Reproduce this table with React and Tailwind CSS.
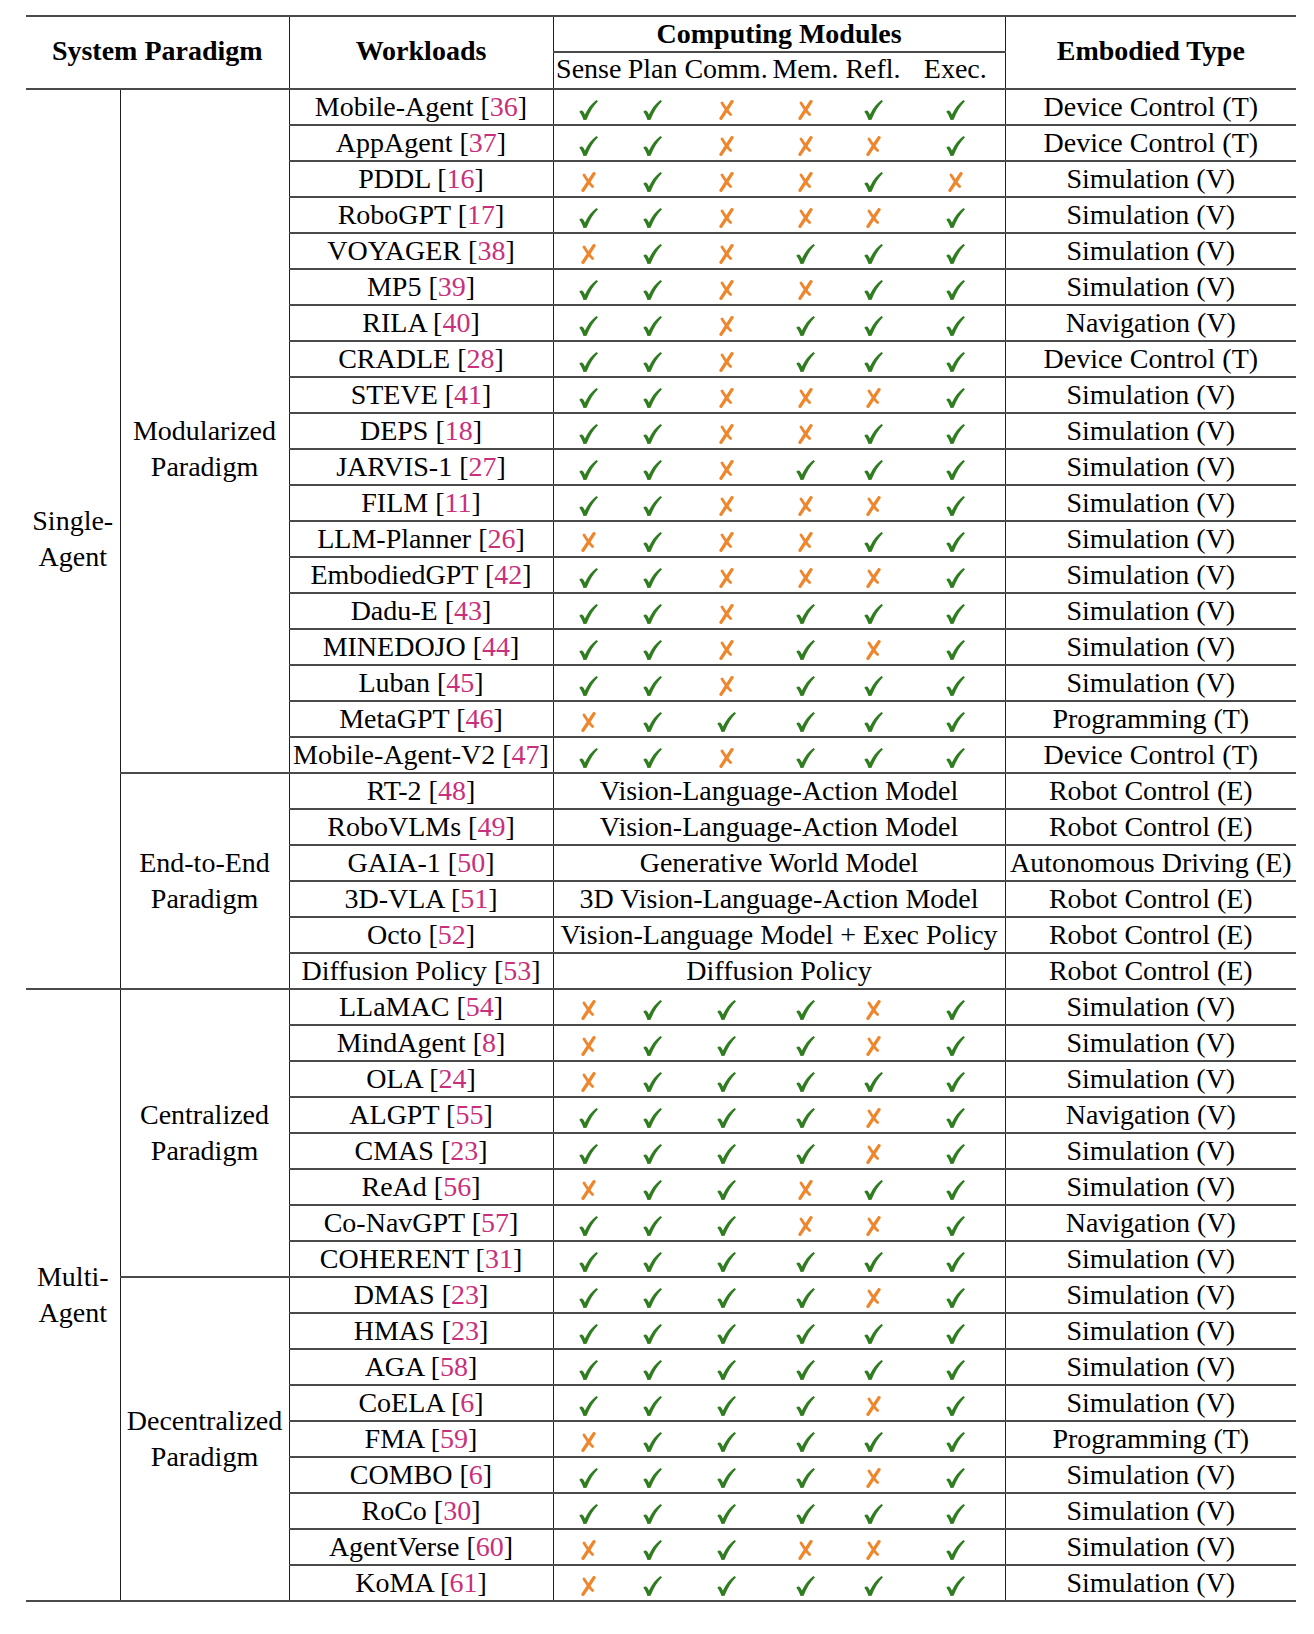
import React from 'react';

const GREEN = '#2f7d20';
const ORANGE = '#f0862c';

const Check = () => (
  <svg width="19" height="20" viewBox="0 0 19 20" className="inline-block align-middle">
    <path
      d="M0.3,11.8 C1.6,10.2 3.4,10.2 4.4,11.8 L5.9,14.4 C8.8,8.6 12.6,3.6 17.4,0 L19,1.3 C14.4,5.8 10.6,12 7.6,19.8 L4.5,20 C3.5,16.8 2,14 0.3,11.8 Z"
      fill={GREEN}
    />
  </svg>
);

const Cross = () => (
  <svg width="15" height="20" viewBox="0 0 15 20" className="inline-block align-middle">
    <path d="M13,1.7 C9.5,7 5.5,13 2,18.3" stroke={ORANGE} strokeWidth="3.3" strokeLinecap="round" fill="none" />
    <path d="M3,3 C5.5,7 8,11 11.6,14.6" stroke={ORANGE} strokeWidth="2.8" strokeLinecap="round" fill="none" />
  </svg>
);

const modular = [
  ['Mobile-Agent', '36', '110011', 'Device Control (T)'],
  ['AppAgent', '37', '110001', 'Device Control (T)'],
  ['PDDL', '16', '010010', 'Simulation (V)'],
  ['RoboGPT', '17', '110001', 'Simulation (V)'],
  ['VOYAGER', '38', '010111', 'Simulation (V)'],
  ['MP5', '39', '110011', 'Simulation (V)'],
  ['RILA', '40', '110111', 'Navigation (V)'],
  ['CRADLE', '28', '110111', 'Device Control (T)'],
  ['STEVE', '41', '110001', 'Simulation (V)'],
  ['DEPS', '18', '110011', 'Simulation (V)'],
  ['JARVIS-1', '27', '110111', 'Simulation (V)'],
  ['FILM', '11', '110001', 'Simulation (V)'],
  ['LLM-Planner', '26', '010011', 'Simulation (V)'],
  ['EmbodiedGPT', '42', '110001', 'Simulation (V)'],
  ['Dadu-E', '43', '110111', 'Simulation (V)'],
  ['MINEDOJO', '44', '110101', 'Simulation (V)'],
  ['Luban', '45', '110111', 'Simulation (V)'],
  ['MetaGPT', '46', '011111', 'Programming (T)'],
  ['Mobile-Agent-V2', '47', '110111', 'Device Control (T)'],
];

const endToEnd = [
  ['RT-2', '48', 'Vision-Language-Action Model', 'Robot Control (E)'],
  ['RoboVLMs', '49', 'Vision-Language-Action Model', 'Robot Control (E)'],
  ['GAIA-1', '50', 'Generative World Model', 'Autonomous Driving (E)'],
  ['3D-VLA', '51', '3D Vision-Language-Action Model', 'Robot Control (E)'],
  ['Octo', '52', 'Vision-Language Model + Exec Policy', 'Robot Control (E)'],
  ['Diffusion Policy', '53', 'Diffusion Policy', 'Robot Control (E)'],
];

const centralized = [
  ['LLaMAC', '54', '011101', 'Simulation (V)'],
  ['MindAgent', '8', '011101', 'Simulation (V)'],
  ['OLA', '24', '011111', 'Simulation (V)'],
  ['ALGPT', '55', '111101', 'Navigation (V)'],
  ['CMAS', '23', '111101', 'Simulation (V)'],
  ['ReAd', '56', '011011', 'Simulation (V)'],
  ['Co-NavGPT', '57', '111001', 'Navigation (V)'],
  ['COHERENT', '31', '111111', 'Simulation (V)'],
];

const decentralized = [
  ['DMAS', '23', '111101', 'Simulation (V)'],
  ['HMAS', '23', '111111', 'Simulation (V)'],
  ['AGA', '58', '111111', 'Simulation (V)'],
  ['CoELA', '6', '111101', 'Simulation (V)'],
  ['FMA', '59', '011111', 'Programming (T)'],
  ['COMBO', '6', '111101', 'Simulation (V)'],
  ['RoCo', '30', '111111', 'Simulation (V)'],
  ['AgentVerse', '60', '011001', 'Simulation (V)'],
  ['KoMA', '61', '011111', 'Simulation (V)'],
];

const hb = 'border-b-2 border-b-[#4a4a4a]';
const vr = 'border-r border-r-[#1f1f1f]';

const Work = ({ name, cite }) => (
  <td className={`${hb} ${vr} h-[34.07px] p-0 text-center align-middle whitespace-nowrap`}>
    {name} [<span className="text-[#c9307b]">{cite}</span>]
  </td>
);

const Marks = ({ bits }) =>
  bits.split('').map((b, i) => (
    <td
      key={i}
      className={`${hb} ${i === 5 ? vr : ''} h-[34.07px] p-0 text-center align-middle`}
    >
      {b === '1' ? <Check /> : <Cross />}
    </td>
  ));

const Embodied = ({ text }) => (
  <td className={`${hb} h-[34.07px] p-0 text-center align-middle whitespace-nowrap`}>{text}</td>
);

const Group = ({ label, rows, first, extra = '' }) =>
  rows.map((r, i) => (
    <tr key={r[0]}>
      {i === 0 && first}
      {i === 0 && (
        <td rowSpan={rows.length} className={`${hb} ${vr} p-0 text-center align-middle leading-[36px] ${extra}`}>
          {label}
        </td>
      )}
      <Work name={r[0]} cite={r[1]} />
      <Marks bits={r[2]} />
      <Embodied text={r[3]} />
    </tr>
  ));

export default function App() {
  const sysCell = (a, b, n) => (
    <td rowSpan={n} className={`${hb} ${vr} p-0 text-center align-middle leading-[36px]`}>
      {a}
      <br />
      {b}
    </td>
  );

  return (
    <div className="min-h-screen bg-white pt-[15px] pl-[26px] font-['Liberation_Serif','Times_New_Roman',serif] text-[28px] leading-[34px] text-black">
      <table className="table-fixed border-collapse w-[1270px]">
        <colgroup>
          <col className="w-[94px]" />
          <col className="w-[169px]" />
          <col className="w-[264px]" />
          <col className="w-[71px]" />
          <col className="w-[57px]" />
          <col className="w-[90px]" />
          <col className="w-[69px]" />
          <col className="w-[66px]" />
          <col className="w-[99px]" />
          <col className="w-[291px]" />
        </colgroup>
        <thead>
          <tr>
            <th colSpan={2} rowSpan={2} className={`border-t-2 border-t-[#4a4a4a] ${hb} ${vr} p-0 pb-[4px] font-bold text-center align-middle whitespace-nowrap`}>
              System Paradigm
            </th>
            <th rowSpan={2} className={`border-t-2 border-t-[#4a4a4a] ${hb} ${vr} p-0 pb-[4px] font-bold text-center align-middle`}>
              Workloads
            </th>
            <th colSpan={6} className={`border-t-2 border-t-[#4a4a4a] ${hb} ${vr} h-[35px] p-0 font-bold text-center align-middle`}>
              Computing Modules
            </th>
            <th rowSpan={2} className={`border-t-2 border-t-[#4a4a4a] ${hb} p-0 pb-[4px] font-bold text-center align-middle`}>
              Embodied Type
            </th>
          </tr>
          <tr>
            {['Sense', 'Plan', 'Comm.', 'Mem.', 'Refl.', 'Exec.'].map((h, i) => (
              <th
                key={h}
                className={`${hb} ${i === 5 ? vr : ''} h-[35px] p-0 pb-[3px] leading-[32px] font-normal text-center align-middle whitespace-nowrap`}
              >
                {h}
              </th>
            ))}
          </tr>
        </thead>
        <tbody>
          <Group
            label={<>Modularized<br />Paradigm</>}
            rows={modular}
            extra="pt-[36px]"
            first={sysCell('Single-', 'Agent', modular.length + endToEnd.length)}
          />
          {endToEnd.map((r, i) => (
            <tr key={r[0]}>
              {i === 0 && (
                <td rowSpan={endToEnd.length} className={`${hb} ${vr} p-0 text-center align-middle leading-[36px]`}>
                  End-to-End
                  <br />
                  Paradigm
                </td>
              )}
              <Work name={r[0]} cite={r[1]} />
              <td colSpan={6} className={`${hb} ${vr} h-[34.07px] p-0 text-center align-middle whitespace-nowrap`}>
                {r[2]}
              </td>
              <Embodied text={r[3]} />
            </tr>
          ))}
          <Group
            label={<>Centralized<br />Paradigm</>}
            rows={centralized}
            first={sysCell('Multi-', 'Agent', centralized.length + decentralized.length)}
          />
          <Group label={<>Decentralized<br />Paradigm</>} rows={decentralized} />
        </tbody>
      </table>
    </div>
  );
}
